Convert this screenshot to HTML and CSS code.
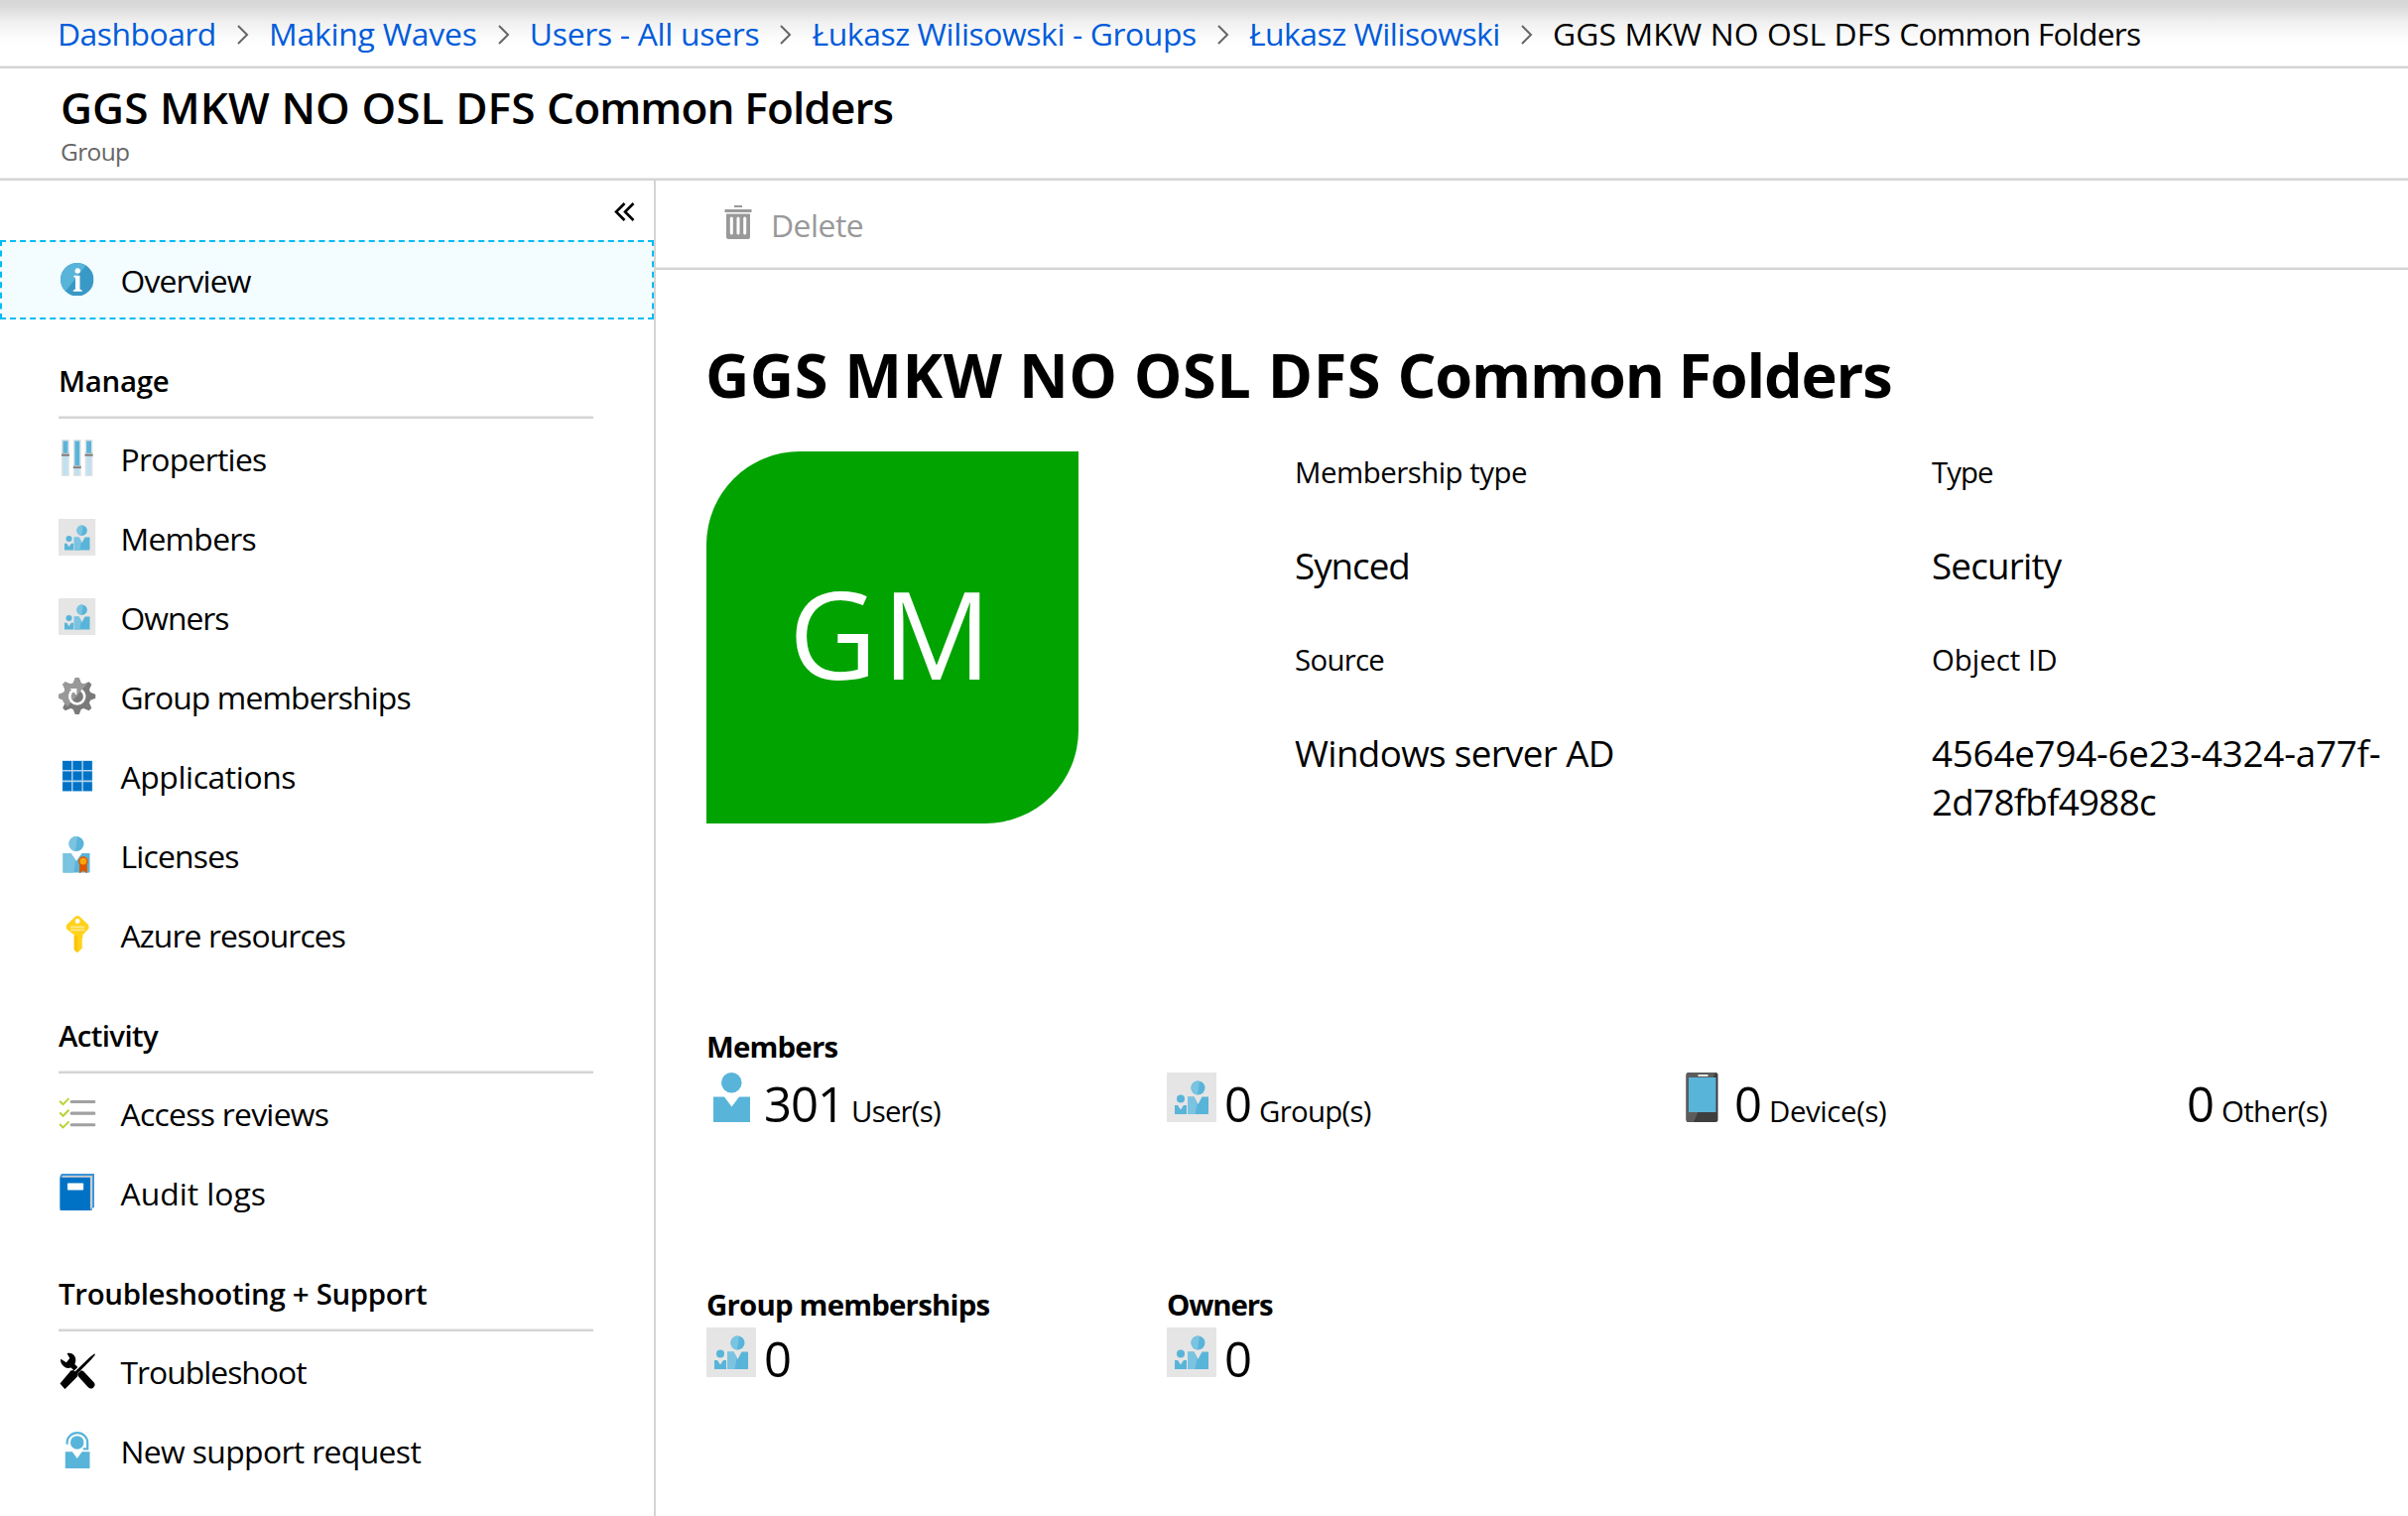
FILE: index.html
```
<!DOCTYPE html>
<html lang="en">
<head>
<meta charset="utf-8">
<title>GGS MKW NO OSL DFS Common Folders</title>
<link rel="stylesheet" href="styles.css">
</head>
<body>
<svg class="sprite" aria-hidden="true">
  <symbol id="chevron" viewBox="0 0 12 20"><path d="M1 1l9 9-9 9" fill="none" stroke="#666" stroke-width="2"/></symbol>
  <symbol id="info" viewBox="0 0 34 34">
    <circle cx="17" cy="17" r="17" fill="#3999c6"/>
    <path d="M17 0A17 17 0 0 0 5 29L26 2.600A17 17 0 0 0 17 0z" fill="#59b4d9"/>
    <circle cx="17.500" cy="8" r="2.700" fill="#fff"/>
    <path d="M13.500 13h6.300v14l2.200 1v1.200h-9V28l2.200-1V15.200l-1.700-1z" fill="#fff"/>
  </symbol>
  <symbol id="sliders" viewBox="0 0 50 50">
    <path d="M4 0h10.500v50H4zM19.800 0h10.500v50H19.800zM35.500 0H46v50H35.500z" fill="#e1e2e3"/>
    <path d="M6 20h6.500v28H6zM21.800 37h6.500v11h-6.500zM37.500 20H44v28h-6.500z" fill="#bfe1f0"/>
    <path d="M6 2h6.500v17H6zM21.800 2h6.500v34h-6.500zM37.500 2H44v17h-6.500z" fill="#59b4d9"/>
    <path d="M4 18h10.500v4.500H4zM19.800 34.500h10.500V39H19.800zM35.500 18H46v4.500H35.500z" fill="#bbb"/>
    <path d="M4 20h10.500v2H4zM19.800 36.500h10.500v2H19.800zM35.500 20H46v2H35.500z" fill="#7a7a7a"/>
  </symbol>
  <symbol id="group" viewBox="0 0 50 50">
    <path d="M0 0h50v50H0z" fill="#e5e5e5"/>
    <g fill="#59b4d9">
      <circle cx="14" cy="26.500" r="4"/><path d="M8 33h3l3 4.500L17 33h3v9H8z"/>
      <circle cx="31.500" cy="15.500" r="7"/><path d="M21 24.500h6.500L31.500 32l4-7.500H42V42H21z"/>
    </g>
    <path d="M33 8.700a7 7 0 1 0-2 13.800zM21 24.500h6.500l3.200 6.200L28.500 42H21z" fill="#7ac3e1"/>
  </symbol>
  <symbol id="gear" viewBox="0 0 50 50">
    <g fill="#7a7a7a">
      <circle cx="25" cy="25" r="18.500"/>
      <path id="tooth" d="M22.500 0h5l3.500 9h-12z"/>
      <use href="#tooth" transform="rotate(45 25 25)"/><use href="#tooth" transform="rotate(90 25 25)"/>
      <use href="#tooth" transform="rotate(135 25 25)"/><use href="#tooth" transform="rotate(180 25 25)"/>
      <use href="#tooth" transform="rotate(225 25 25)"/><use href="#tooth" transform="rotate(270 25 25)"/>
      <use href="#tooth" transform="rotate(315 25 25)"/>
    </g>
    <path d="M22.500 0h5l2 7 5 2 6-3.500L12 39l-5.500-6L5 29l-5-1.500v-5L7 20l2-5-3.500-6L9 5.500 15 9l5-2z" fill="#999"/>
    <path d="M30.500 17a10 10 0 1 1-11 0" fill="none" stroke="#fff" stroke-width="3.600"/>
    <path d="M15.500 14.500h9v9z" fill="#fff"/>
  </symbol>
  <symbol id="grid" viewBox="0 0 50 50">
    <path d="M5 4.500h40.700v41.700H5z" fill="#b3d5ee"/>
    <path d="M5.500 5.200h12v12h-12zM19.300 5.200h12v12h-12zM33.100 5.200h12v12h-12zM5.500 19.300h12v12h-12zM19.300 19.300h12v12h-12zM33.100 19.300h12v12h-12zM5.500 33.500h12v12h-12zM19.300 33.500h12v12h-12zM33.100 33.500h12v12h-12z" fill="#0072c6"/>
  </symbol>
  <symbol id="license" viewBox="0 0 50 50">
    <g fill="#59b4d9"><circle cx="24" cy="10" r="10"/><path d="M6 22.500h10.500L24 33l7.500-10.500H42V48.500H6z"/></g>
    <path d="M25.500 0a10 10 0 1 0-3 20zM6 22.500h10.500L23 32 20.500 48.500H6z" fill="#7ac3e1"/>
    <path d="M28 36h10.500v14L33.200 46 28 50z" fill="#dd5900"/>
    <circle cx="33.200" cy="33.500" r="6.500" fill="#dd5900"/><circle cx="33.200" cy="33.500" r="4.400" fill="#fba60d"/>
  </symbol>
  <symbol id="key" viewBox="0 0 50 50">
    <path d="M22 1.500q3.500-3 7 0L40 12q1.500 3 0 6l-7.500 7.500V30l-1.500 2 1.500 2-1.500 2 1.500 2-1.500 2 1.500 2.500-7 7.500-4.500-4.500v-20L11 18q-1.500-3 0-6z" fill="#ffd21a"/>
    <path d="M23.500 27h2v22l-4.500-3.500V27z" fill="#ffc10a"/>
    <circle cx="25.500" cy="7.300" r="3.200" fill="#fff"/>
    <path d="M16 14h19v2.400H16zM16 18h19v2.400H16z" fill="#ffe88c"/>
  </symbol>
  <symbol id="checklist" viewBox="0 0 50 50">
    <g fill="none" stroke="#b8d432" stroke-width="2.600"><path d="M1.500 9l4.500 4.500L14 5.500"/><path d="M1.500 24.500L6 29l8-8"/><path d="M1.500 40L6 44.500l8-8"/></g>
    <g stroke="#a0a1a2" stroke-width="4.200" stroke-linecap="round"><path d="M17.500 10H48M17.500 25.500H48M17.500 41H48"/></g>
  </symbol>
  <symbol id="book" viewBox="0 0 50 50">
    <path d="M4 0h44v45.500h-3V50H5L2 46V3z" fill="#3a93d8"/>
    <path d="M5 2.500h40.500V44L42 49V6H4.500z" fill="#ccc"/>
    <path d="M2 5h40.500v45H4q-2 0-2-2z" fill="#0072c6"/>
    <rect x="12" y="12.500" width="21.500" height="9.500" rx="1" fill="#fff"/>
  </symbol>
  <symbol id="tools" viewBox="0 0 50 50">
    <path d="M18 17l12 12" stroke="#000" stroke-width="7"/>
    <path d="M31 30l12.500 13.500" stroke="#000" stroke-width="10" stroke-linecap="round"/>
    <path d="M3 9l7.500 4.500L15 8l-3.500-6.500C19-.5 25 6 22.500 14c-2 7-9.500 9-14.500 5.500C4 17 2 13 3 9z"/>
    <path d="M22 28L45 6" stroke="#fff" stroke-width="6"/>
    <path d="M21 27L42 6.500 48.500 1.500 49 3.500 44 9.500 24 30z"/>
    <path d="M16.500 24.500l3.500-.5 5.500 5-.5 4L8.500 49.500 2 42z"/>
  </symbol>
  <symbol id="support" viewBox="0 0 50 50">
    <g fill="#59b4d9"><circle cx="25" cy="14.500" r="9"/><path d="M9 27h9.500L25 36l6.500-9H42v23H9z"/></g>
    <path d="M11.500 17V14.500a13.700 13 0 0 1 27.400 0V23H33" fill="none" stroke="#59b4d9" stroke-width="3"/>
  </symbol>
  <symbol id="user" viewBox="0 0 50 50"><g fill="#59b4d9"><circle cx="25.300" cy="10.300" r="10.300"/><path d="M7 24.500h11L25.500 34.500 33 24.500h11V50H7z"/></g></symbol>
  <symbol id="phone" viewBox="0 0 50 50">
    <rect x="9.500" width="32" height="50" rx="2.500" fill="#3e3e3e"/>
    <path d="M12 0h27L17 50h-5q-2.500 0-2.500-2.500v-45Q9.500 0 12 0z" fill="#5c5c5c"/>
    <path d="M12 5h27.500v35H12z" fill="#59b4d9"/><path d="M21.500 2h10v2h-10z" fill="#e5e5e5"/>
  </symbol>
  <symbol id="trash" viewBox="0 0 28 34">
    <path d="M10 0h8v2h-8zM.5 4h27v3H.500zM2 8.500h24V32q0 2-2 2H4q-2 0-2-2z" fill="#999"/>
    <g stroke="#fff" stroke-width="3" stroke-linecap="round"><path d="M7.300 13v15M14 13v15M20.700 13v15"/></g>
  </symbol>
  <symbol id="collapse" viewBox="0 0 21 19"><path d="M10.500 1L2 9.500l8.500 8.500M19.500 1L11 9.500l8.500 8.500" fill="none" stroke="#000" stroke-width="2.600"/></symbol>
</svg>

<nav class="breadcrumb">
  <a class="ls-5">Dashboard</a><svg class="chev"><use href="#chevron"/></svg>
  <a class="ls-2">Making Waves</a><svg class="chev"><use href="#chevron"/></svg>
  <a class="ls-3">Users - All users</a><svg class="chev"><use href="#chevron"/></svg>
  <a class="ls-4">Łukasz Wilisowski - Groups</a><svg class="chev"><use href="#chevron"/></svg>
  <a class="ls-5">Łukasz Wilisowski</a><svg class="chev"><use href="#chevron"/></svg>
  <span class="wide-1">GGS MKW NO OSL DFS <span class="ls-8">Common Folders</span></span>
</nav>

<header class="blade-head">
  <div class="blade-title wide-1">GGS MKW NO OSL DFS <span class="ls-9">Common Folders</span></div>
  <div class="blade-sub ls-6">Group</div>
</header>

<div class="blade">
  <aside class="sidebar">
    <div class="collapse"><svg><use href="#collapse"/></svg></div>
    <a class="item active"><svg class="ico info"><use href="#info"/></svg><span class="ls-9">Overview</span></a>

    <h3 class="ls-3">Manage</h3>
    <a class="item"><svg class="ico"><use href="#sliders"/></svg><span class="ls-7">Properties</span></a>
    <a class="item"><svg class="ico"><use href="#group"/></svg><span class="ls-7">Members</span></a>
    <a class="item"><svg class="ico"><use href="#group"/></svg><span class="ls-10">Owners</span></a>
    <a class="item"><svg class="ico"><use href="#gear"/></svg><span class="ls-9">Group memberships</span></a>
    <a class="item"><svg class="ico"><use href="#grid"/></svg><span class="ls-4">Applications</span></a>
    <a class="item"><svg class="ico"><use href="#license"/></svg><span class="ls-8">Licenses</span></a>
    <a class="item"><svg class="ico"><use href="#key"/></svg><span class="ls-9">Azure resources</span></a>

    <h3 class="ls-6">Activity</h3>
    <a class="item"><svg class="ico"><use href="#checklist"/></svg><span class="ls-7">Access reviews</span></a>
    <a class="item"><svg class="ico"><use href="#book"/></svg><span>Audit logs</span></a>

    <h3 class="ls-3">Troubleshooting + Support</h3>
    <a class="item"><svg class="ico"><use href="#tools"/></svg><span class="ls-10">Troubleshoot</span></a>
    <a class="item"><svg class="ico"><use href="#support"/></svg><span class="ls-6">New support request</span></a>
  </aside>

  <main class="content">
    <div class="toolbar"><svg class="trash"><use href="#trash"/></svg><span class="ls-5">Delete</span></div>
    <div class="overview">
      <h1 class="wide-2">GGS MKW NO OSL DFS <span class="ls-12">Common Folders</span></h1>
      <section class="essentials">
        <div class="avatar">GM</div>
        <dl>
          <dt class="ls-5">Membership type</dt><dd class="ls-10">Synced</dd>
          <dt class="ls-7">Source</dt><dd class="ls-6">Windows server AD</dd>
        </dl>
        <dl>
          <dt class="ls-10">Type</dt><dd class="ls-8">Security</dd>
          <dt>Object ID</dt><dd><span class="ls-2">4564e794-6e23-4324-a77f-</span><wbr><span class="ls-7">2d78fbf4988c</span></dd>
        </dl>
      </section>

      <section class="members">
        <h2 class="ls-8">Members</h2>
        <div class="stats">
          <div class="stat"><svg class="pic"><use href="#user"/></svg><b class="ls-10">301</b><span class="ls-8">User(s)</span></div>
          <div class="stat"><svg class="pic"><use href="#group"/></svg><b>0</b><span class="ls-7">Group(s)</span></div>
          <div class="stat"><svg class="pic"><use href="#phone"/></svg><b>0</b><span class="ls-4">Device(s)</span></div>
          <div class="stat"><b>0</b><span class="ls-6">Other(s)</span></div>
        </div>
      </section>

      <section class="stats links">
        <div><h2 class="ls-8">Group memberships</h2><div class="stat"><svg class="pic"><use href="#group"/></svg><b>0</b></div></div>
        <div><h2 class="ls-11">Owners</h2><div class="stat"><svg class="pic"><use href="#group"/></svg><b>0</b></div></div>
      </section>
    </div>
  </main>
</div>
</body>
</html>
```
FILE: styles.css
```
* { box-sizing: border-box; margin: 0; padding: 0; }
body {
  width: 2427px; height: 1528px; overflow: hidden;
  display: flex; flex-direction: column;
  background: #fff; color: #000;
  font: 31.85px/40px "Open Sans", "Noto Sans", sans-serif;
  white-space: nowrap;
}
.sprite { display: none; }

/* tracking steps, about a tenth of a pixel each */
.wide-1 { letter-spacing: .1px; }
.wide-2 { letter-spacing: .5px; }
.ls-2 { letter-spacing: -.22px; }
.ls-3 { letter-spacing: -.3px; }
.ls-4 { letter-spacing: -.4px; }
.ls-5 { letter-spacing: -.5px; }
.ls-6 { letter-spacing: -.63px; }
.ls-7 { letter-spacing: -.71px; }
.ls-8 { letter-spacing: -.8px; }
.ls-9 { letter-spacing: -.88px; }
.ls-10 { letter-spacing: -1px; }
.ls-11 { letter-spacing: -1.1px; }
.ls-12 { letter-spacing: -1.2px; }

.breadcrumb {
  flex: none; height: 69px; padding-left: 58px;
  display: flex; align-items: center;
  border-bottom: 2px solid #d4d4d4;
  box-shadow: inset 0 -1px #ebebeb;
  background: linear-gradient(#d6d6d6 0, #d9d9d9 6px, #f0f0f0 22px, #fcfcfc 38px, #fff 48px);
}
.breadcrumb a { color: #015cda; }
.chev { width: 12px; height: 20px; margin: 2px 20.200px 0 21px; }

.blade-head {
  flex: none; height: 113px; padding: 9px 0 0 61px;
  border-bottom: 2px solid #d4d4d4;
  box-shadow: inset 0 -1px #ebebeb;
}
.blade-title { font-size: 44.1px; line-height: 60px; font-weight: 600; }
.blade-sub { font-size: 24.5px; line-height: 29px; color: #666; }

.blade { flex: 1; display: flex; min-height: 0; }
.sidebar { flex: none; width: 661px; border-right: 2px solid #d4d4d4; overflow: hidden; }
.collapse { height: 60px; padding: 22px 19px 0 0; display: flex; justify-content: flex-end; }
.collapse svg { width: 21px; height: 19px; }
.item { height: 80px; padding-left: 59px; display: flex; align-items: center; gap: 25px; }
.item span { padding-top: 1px; }
.item svg { margin-top: -1px; }
.active { padding-left: 57px; background: #f3fcff; border: 2px dashed #00bcf2; border-width: 2.5px 2px; }
.ico { width: 37.5px; height: 37.5px; flex: none; }
.info { padding: 2px; }
h3 {
  height: 100px; margin: 0 61px 0 59px; padding-top: 41px;
  font-size: 29.4px; line-height: 42px; font-weight: 600;
  border-bottom: 2px solid #d4d4d4; box-shadow: inset 0 -1px #ebebeb;
}

.content { flex: 1; min-width: 0; }
.toolbar {
  height: 90px; padding-left: 69px; display: flex; align-items: center; gap: 19px;
  color: #999; border-bottom: 2px solid #d4d4d4; box-shadow: inset 0 -1px #ebebeb;
}
.toolbar span { padding-top: 1px; }
.trash { width: 28px; height: 34px; margin-top: -5px; }

.overview { padding: 66px 0 0 51px; }
h1 { font-size: 61.25px; line-height: 80px; font-weight: 700; margin-left: -1px; }
.essentials { display: grid; grid-template-columns: 592px 642px 481px; margin-top: 37px; height: 375px; }
.essentials dl { padding: 1px 0 0 1px; }
.avatar {
  width: 375px; height: 375px; border-radius: 94px 0; background: #00a300; color: #fff;
  font-size: 122.5px; line-height: 365px; letter-spacing: 5px; text-align: center;
}
dt { font-size: 29.4px; }
dd { font-size: 36.75px; line-height: 49.4px; margin: 50px 0 49.600px; white-space: normal; }

h2 { font-size: 29.4px; line-height: 40px; font-weight: 700; }
.members { margin-top: 205px; }
.stats { display: grid; grid-template-columns: 464px 514px 514px 223px; align-items: last baseline; }
.members .stats { margin-top: 6px; }
.stat { display: flex; align-items: baseline; }
.pic { width: 50px; height: 50px; margin-right: 8px; }
.stat b { font-size: 49px; line-height: 50px; font-weight: 400; margin-right: 7px; }
.stat span { font-size: 29.4px; line-height: 40px; }
.links { margin-top: 155px; }
.links .stat { margin-top: 3px; }
```
